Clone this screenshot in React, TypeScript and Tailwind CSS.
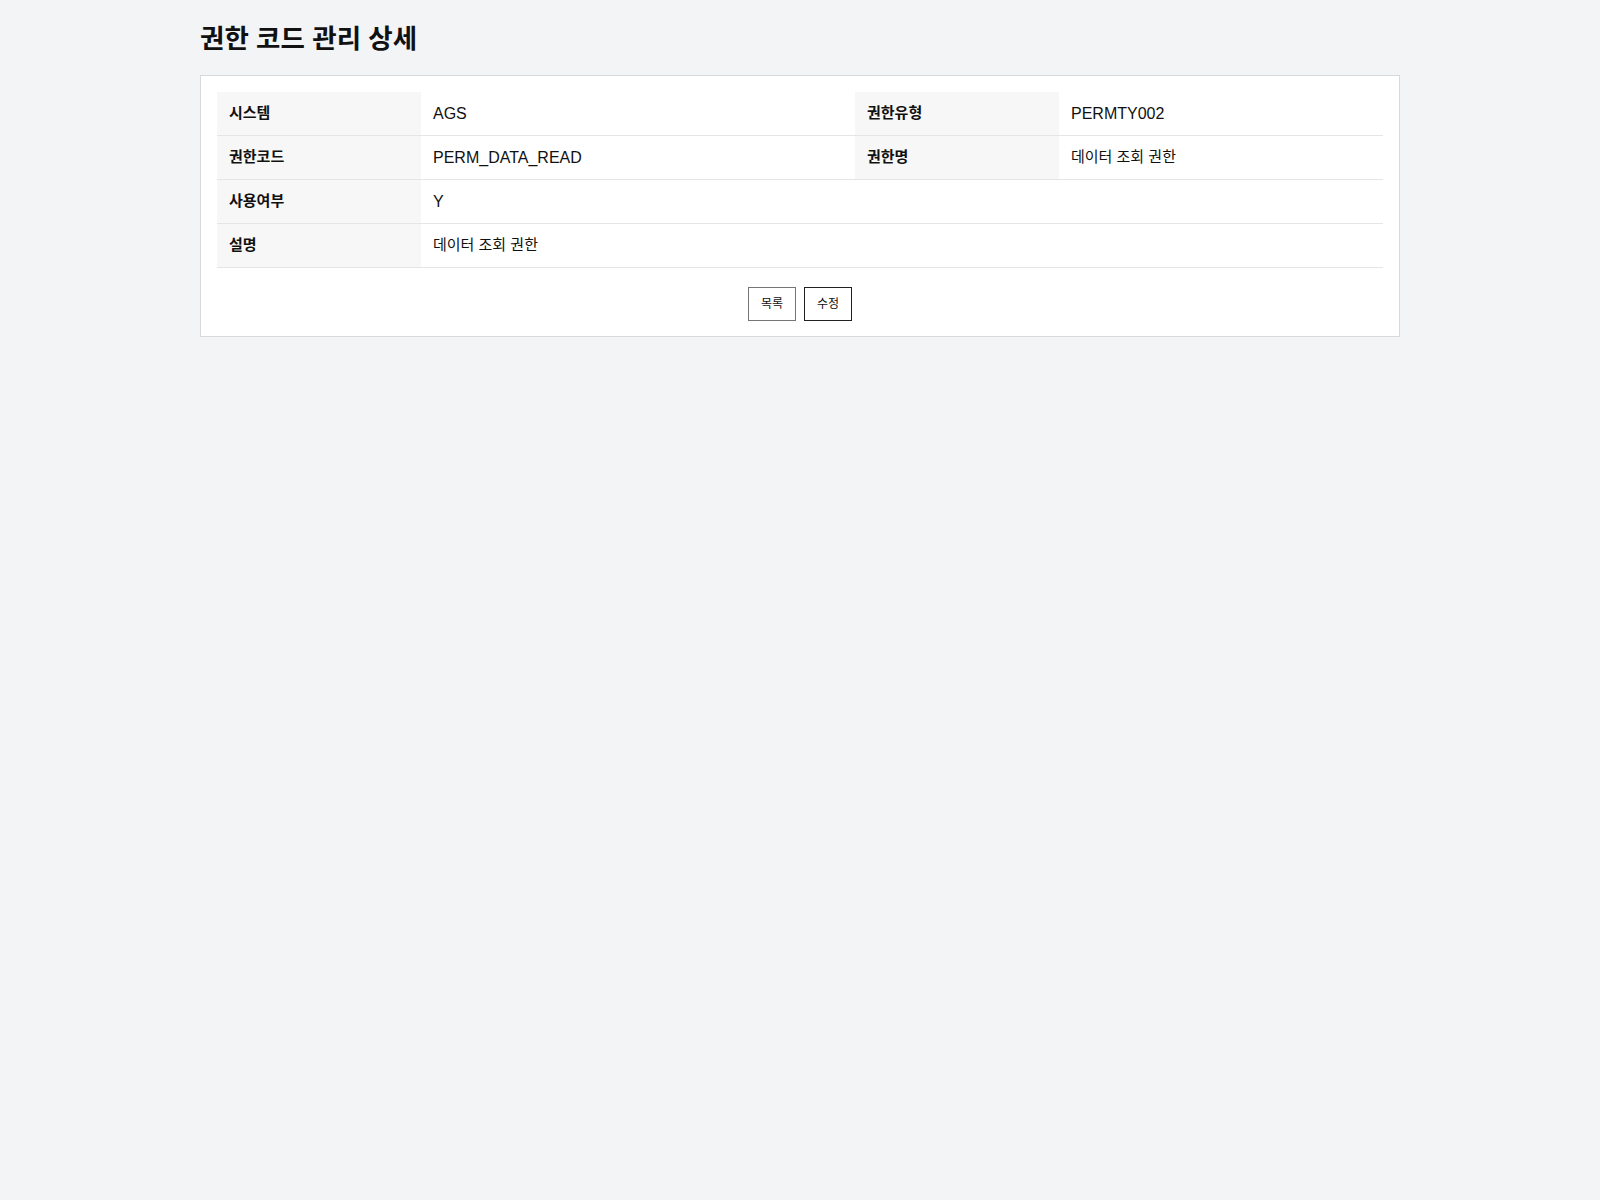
const rows: { label: string; value: string; label2?: string; value2?: string }[] = [
  { label: "시스템", value: "AGS", label2: "권한유형", value2: "PERMTY002" },
  { label: "권한코드", value: "PERM_DATA_READ", label2: "권한명", value2: "데이터 조회 권한" },
  { label: "사용여부", value: "Y" },
  { label: "설명", value: "데이터 조회 권한" },
];

const th =
  "flex h-[44px] items-center border-b border-[#e5e5e5] bg-[#f7f7f7] px-3 pb-[2px] text-[15px] font-bold leading-5 text-[#111]";
const td = "flex h-[44px] items-center border-b border-[#e5e5e5] px-3 leading-5 text-[#111]";

// hangul values render a touch smaller than latin ones in the reference
const valueSize = (v: string) => (/[가-힣]/.test(v) ? "text-[15px] pb-[2px]" : "text-[16px]");

export default function App() {
  return (
    <div
      className="min-h-screen bg-[#f3f4f6] pt-[23px]"
      style={{ fontFamily: '"Liberation Sans", "Noto Sans CJK KR", sans-serif' }}
    >
      <main className="mx-auto w-[1200px]">
        <h1 className="mb-[20px] text-[26.5px] font-bold leading-8 text-[#111]">권한 코드 관리 상세</h1>

        <div className="border border-[#d9d9d9] bg-white px-4 pt-4 pb-[15px]">
          <div className="grid grid-cols-[204px_434px_204px_1fr]">
            {rows.map((r) =>
              r.label2 ? (
                <div key={r.label} className="contents">
                  <div className={th}>{r.label}</div>
                  <div className={`${td} ${valueSize(r.value)}`}>{r.value}</div>
                  <div className={th}>{r.label2}</div>
                  <div className={`${td} ${valueSize(r.value2 ?? "")}`}>{r.value2}</div>
                </div>
              ) : (
                <div key={r.label} className="contents">
                  <div className={th}>{r.label}</div>
                  <div className={`${td} ${valueSize(r.value)} col-span-3`}>{r.value}</div>
                </div>
              )
            )}
          </div>

          <div className="mt-[19px] flex justify-center gap-2">
            <button className="border border-[#767676] bg-white px-3 py-2 text-[12px] leading-4 text-[#111]">
              목록
            </button>
            <button className="border border-[#222] bg-white px-3 py-2 text-[12px] leading-4 text-[#111]">
              수정
            </button>
          </div>
        </div>
      </main>
    </div>
  );
}
